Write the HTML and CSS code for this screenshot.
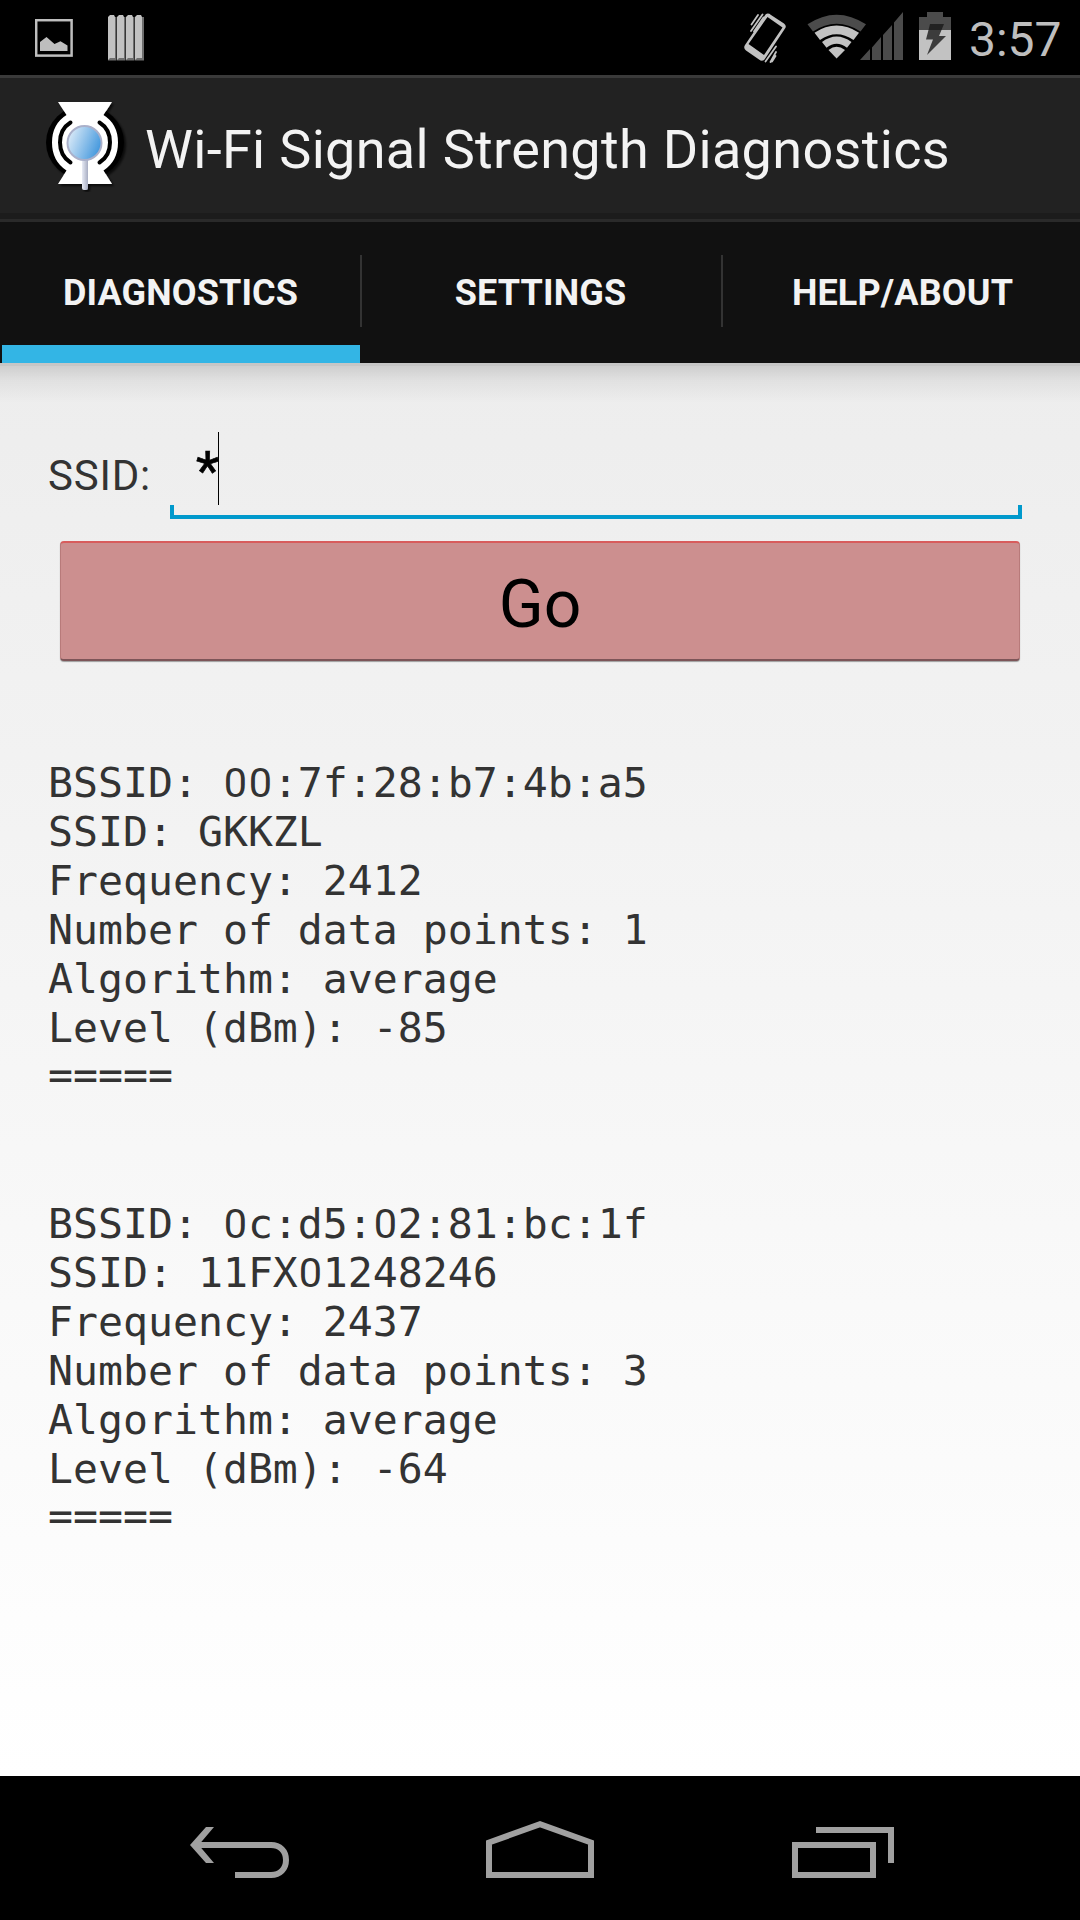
FILE: index.html
```html
<!DOCTYPE html>
<html lang="en">
<head>
<meta charset="utf-8">
<title>Wi-Fi Signal Strength Diagnostics</title>
<link rel="stylesheet" href="styles.css">
</head>
<body>
<div class="screen">
  <header class="status">
    <div class="status-left">
      <svg class="ic-picture" width="38" height="38" viewBox="35 19 38 38"><rect x="36.2" y="20.2" width="35.4" height="35.4" fill="none" stroke="#bebebe" stroke-width="2.5"/><path d="M40 51V42L46.500 37L54.500 44L60.500 41.300L67.500 45.500V51Z" fill="#bebebe"/></svg>
      <svg class="ic-bars" width="36" height="46" viewBox="108 15 36 46"><g fill="#6e6e6e"><path d="M108 17h8.500v43.500h-8.500zM117 17h8.500v43.500h-8.500zM126 17h8.500v43.500h-8.500zM135 17h9v43.500h-9z"/></g><g fill="#c2c2c2"><path d="M108 17l2-2h4l1 2v41h-5l-2 2zM117 17l2-2h4l1 2v41h-5l-2 2zM126 17l2-2h4l1 2v41h-5l-2 2zM135 17l2-2h4l1 2v41h-5l-2 2z"/></g></svg>
    </div>
    <div class="status-right">
      <svg class="ic-vibrate" width="43" height="50" viewBox="744 12.500 43 50" fill="none" stroke="#c2c2c2"><path fill="#c2c2c2" stroke="none" fill-rule="evenodd" d="M765.500 14Q768 12 771 14.500L784 23Q787 25.500 785 28L764.500 59Q762 61.500 759 59L746 50Q743 47.500 745 44.500ZM767.500 16.500L748.500 43.500L764 54.500L782.500 27Z"/><path stroke-width="1.800" stroke-linecap="round" d="M758 14.500L751.500 24M762.500 14L751 30.500M763.500 17L754 31M776 46L765.500 61M776 51.500L770.500 61.500M775.500 55.500L772 61"/></svg>
      <svg class="ic-wifi" width="60" height="46" viewBox="807 14 60 46"><path fill="#4b4b4b" d="M807.500 24.300Q836.500 5 866 24.300L860.500 31.500Q836.500 16 813 31.500Z"/><g fill="#c2c2c2"><path d="M814.500 32.700Q836.500 18.500 859 32.700L853.500 40Q836.500 28.500 820 40Z"/><path d="M822 42Q836.500 31 851.500 42L847 47.800Q836.500 39.500 826.500 47.800Z"/><path d="M828.500 50Q836.500 43.500 845 50L836.600 58.500Z"/></g></svg>
      <svg class="ic-cell" width="43" height="48" viewBox="860 12 43 48"><path fill="#4b4b4b" d="M860 60L870 49V60ZM872 47.500L881 37V60H872ZM883 35L892 25V60H883ZM894 22.500L903 12V60H894Z"/></svg>
      <svg class="ic-battery" width="32" height="48" viewBox="919 12 32 48"><path fill="#4b4b4b" d="M927 12H943V17H951V30H919V17H927Z"/><path fill="#c2c2c2" d="M919 30H951V60H919Z"/><path fill="#222" d="M930 24H944L941.500 30H928.500Z"/><path fill="#3c3c3c" d="M928.500 30H941.500L939 36H946L927 55L933 39.500H926Z"/></svg>
      <span class="clock">3:57</span>
    </div>
  </header>

  <div class="titlebar">
    <svg class="logo" width="84" height="96" viewBox="44 96 84 96">
      <defs>
        <linearGradient id="lens" x1="0" y1=".3" x2="1" y2=".7"><stop offset="0" stop-color="#dcebf8"/><stop offset="1" stop-color="#3c94dc"/></linearGradient>
        <linearGradient id="stick"><stop offset="0" stop-color="#e8ebf5"/><stop offset="1" stop-color="#a7adc2"/></linearGradient>
        <filter id="shade" x="-20%" y="-20%" width="140%" height="140%"><feDropShadow dx="2" dy="2" stdDeviation="1.200" flood-opacity=".7"/></filter>
      </defs>
      <g filter="url(#shade)">
        <ellipse cx="85" cy="142.500" rx="39" ry="37" fill="#000"/>
        <path fill="#fff" d="M58 102H112L103.500 115Q118 124 118 142.500Q118 161 103.500 170.500L112 184H58L66.500 170.500Q52 161 52 142.500Q52 124 66.500 115Z"/>
        <path fill="none" stroke="#000" stroke-width="4" stroke-linecap="round" d="M70.500 122.500Q60 129 60 142.500Q60 156 70.500 162.500M99.500 122.500Q110 129 110 142.500Q110 156 99.500 162.500"/>
        <path fill="url(#stick)" d="M82 159H88V188Q88 190 86 190H84Q82 190 82 188Z"/>
        <circle cx="84.500" cy="143" r="17" fill="url(#lens)" stroke="#aab0ca" stroke-width="2"/>
      </g>
    </svg>
    <h1 class="title">Wi-Fi Signal Strength Diagnostics</h1>
  </div>

  <nav class="tabs">
    <div class="tab active">DIAGNOSTICS</div>
    <div class="tab">SETTINGS</div>
    <div class="tab last">HELP/ABOUT</div>
  </nav>

  <main class="content">
    <div class="form-row">
      <label class="label">SSID:</label>
      <div class="field"><span class="value">*</span><i class="caret"></i></div>
    </div>
    <button class="go">Go</button>
    <section class="result">
      <div class="line">BSSID: <span class="zero">0</span><span class="zero">0</span>:7f:28:b7:4b:a5</div>
      <div class="line">SSID: GKKZL</div>
      <div class="line">Frequency: 2412</div>
      <div class="line">Number of data points: 1</div>
      <div class="line">Algorithm: average</div>
      <div class="line">Level (dBm): -85</div>
      <div class="line rule">=====</div>
    </section>
    <section class="result">
      <div class="line">BSSID: <span class="zero">0</span>c:d5:<span class="zero">0</span>2:81:bc:1f</div>
      <div class="line">SSID: 11FX<span class="zero">0</span>1248246</div>
      <div class="line">Frequency: 2437</div>
      <div class="line">Number of data points: 3</div>
      <div class="line">Algorithm: average</div>
      <div class="line">Level (dBm): -64</div>
      <div class="line rule">=====</div>
    </section>
  </main>

  <footer class="navbar">
    <svg class="nav-back" width="100" height="60" viewBox="190 1820 100 60" fill="none" stroke="#a0a0a0" stroke-width="6"><path d="M198 1845H271C280 1845 286 1851 286 1860C286 1869 280 1875 271 1875H235"/><path fill="#a0a0a0" stroke="none" d="M190 1845L206 1827H214L200 1843.500V1846.500L214 1863H206Z"/></svg>
    <svg class="nav-home" width="108" height="60" viewBox="486 1820 108 60" fill="none" stroke="#a0a0a0" stroke-width="6"><path d="M489 1875V1842.500L540 1824.200L591 1842.500V1875Z"/></svg>
    <svg class="nav-recent" width="102" height="60" viewBox="792 1820 102 60" fill="none" stroke="#a0a0a0" stroke-width="6"><path d="M795 1845H873V1875H795ZM816 1830H891V1863"/></svg>
  </footer>
</div>
</body>
</html>
```
FILE: styles.css
```css
* { box-sizing: border-box; }
body { margin: 0; background: #000; }
svg { display: block; flex: none; }
.screen {
  width: 1080px;
  height: 1920px;
  display: flex;
  flex-direction: column;
  overflow: hidden;
  font-family: Roboto, sans-serif;
}

.status {
  height: 75px;
  flex: none;
  display: flex;
  justify-content: space-between;
  background: #000;
}
.status-left, .status-right { display: flex; align-items: flex-start; }
.ic-picture { margin: 19px 0 0 35px; }
.ic-bars { margin: 15px 0 0 35px; }
.ic-vibrate { margin: 12.5px 20px 0 0; }
.ic-wifi { margin: 14px -7px 0 0; }
.ic-cell { margin: 12px 16px 0 0; }
.ic-battery { margin: 12px 18px 0 0; }
.clock {
  width: 111px;
  font-size: 48px;
  line-height: 56px;
  margin-top: 12px;
  color: #bebebe;
}

.titlebar {
  height: 147px;
  flex: none;
  display: flex;
  padding-left: 44px;
  background: linear-gradient(#3a3a3a 3px, #222 3px 138px, #1c1c1c 138px 144px, #2a2a2a 144px);
}
.logo { margin-top: 21px; }
.title {
  margin: 0 0 0 17px;
  color: #f3f3f3;
  font-size: 54px;
  font-weight: 400;
  line-height: 64px;
  letter-spacing: .32px;
  padding-top: 43px;
  white-space: nowrap;
}

.tabs {
  height: 141px;
  flex: none;
  display: grid;
  grid-template-columns: 360px 361px 359px;
  background: #111;
}
.tab {
  padding: 50px 0 0;
  text-align: center;
  color: #f3f3f3;
  font-size: 36px;
  font-weight: 700;
  line-height: 42px;
  letter-spacing: .15px;
  background: linear-gradient(#333, #333) 0 33px / 2px 72px no-repeat;
}
.tab.last { padding-left: 4px; }
.tab.active {
  padding-left: 1px;
  background: linear-gradient(#33b5e5, #33b5e5) 2px 123px / 358px 18px no-repeat;
}

.content {
  flex: 1;
  padding: 69px 58px 0 48px;
  background:
    linear-gradient(#c6c6c6 3px, rgba(0,0,0,.13) 3px, rgba(0,0,0,.05) 18px, rgba(0,0,0,0) 40px) 0 0 / 100% 40px no-repeat,
    linear-gradient(#ededed, #fff);
}
.form-row { display: flex; height: 87px; }
.label {
  width: 122px;
  color: #333;
  font-size: 42px;
  line-height: 50px;
  letter-spacing: .8px;
  padding-top: 19px;
}
.field {
  width: 852px;
  display: flex;
  padding-left: 26px;
  background:
    linear-gradient(#09c, #09c) 0 100% / 100% 4px no-repeat,
    linear-gradient(#09c, #09c) 0 100% / 4px 14px no-repeat,
    linear-gradient(#09c, #09c) 100% 100% / 4px 14px no-repeat;
}
.value {
  width: 22px;
  font-size: 54px;
  line-height: 77px;
  color: #000;
  -webkit-text-stroke: .7px #000;
}
.caret { width: 1px; height: 73px; background: #000; }
.go {
  display: block;
  width: 960px;
  height: 120px;
  margin: 22px 0 0 12px;
  padding: 8px 0 0;
  border: 1px solid #b87a7a;
  border-top: 2px solid #d85c5c;
  border-bottom: 2px solid #7d5558;
  border-radius: 4px;
  box-shadow: 0 1px 1px rgba(0,0,0,.35);
  background: #cc8f8f;
  color: #000;
  font-family: inherit;
  font-size: 66px;
  line-height: 78px;
}
.result {
  margin-top: 97px;
  color: #333;
  font-family: "DejaVu Sans Mono", monospace;
  font-size: 41.5px;
  line-height: 49px;
}
.result + .result { margin-top: 98px; }
.line { height: 49px; white-space: pre; }
.rule { line-height: 45px; }
.zero {
  margin: 0 .84px;
  font-family: Roboto, sans-serif;
}

.navbar {
  height: 144px;
  flex: none;
  display: flex;
  align-items: flex-start;
  padding: 44px 186px 0 190px;
  background: #000;
}
.nav-home { margin-left: 196px; }
.nav-recent { margin-left: 198px; }
```
